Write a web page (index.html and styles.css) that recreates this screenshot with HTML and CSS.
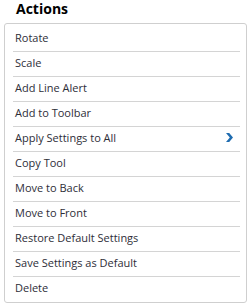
FILE: index.html
```html
<!DOCTYPE html>
<html lang="en">
<head>
    <meta charset="UTF-8">
    <title>Actions</title>
    <link rel="stylesheet" href="styles.css">
</head>
<body>
<div class="actions">
    <h2 class="actions-title">Actions</h2>
    <ul class="actions-list">
        <li>Rotate</li>
        <li>Scale</li>
        <li>Add Line Alert</li>
        <li>Add to Toolbar</li>
        <li class="has-sub">Apply Settings to All
            <svg class="chevron" width="7" height="9" viewBox="0 0 7 9">
                <path d="M0 0 L3.2 0 L7 4.5 L3.2 9 L0 9 L3.8 4.5 Z" fill="#1f6cb0"/>
            </svg>
        </li>
        <li>Copy Tool</li>
        <li>Move to Back</li>
        <li>Move to Front</li>
        <li>Restore Default Settings</li>
        <li>Save Settings as Default</li>
        <li>Delete</li>
    </ul>
</div>
</body>
</html>
```
FILE: styles.css
```css
* {
    margin: 0;
    padding: 0;
    box-sizing: border-box;
}

body {
    background: #fff;
    font-family: "Open Sans", sans-serif;
    color: #2e2e38;
}

.actions {
    width: 252px;
    padding: 0 5px 0 4px;
}

/* title */
.actions-title {
    font-size: 14px;
    font-weight: bold;
    color: #000;
    height: 23px;
    line-height: 18px;
    padding-left: 12px;
}

.actions-list {
    list-style: none;
    border: 1px solid #cfcfcf;
    border-radius: 3px;
    padding: 3px 6px 1px 8px;
}

.actions-list li {
    height: 25px;
    line-height: 22px;
    font-size: 11px;
    padding: 0 0 2px 2px;
    border-bottom: 1px solid #d4d4d4;
    display: flex;
    justify-content: space-between;
    align-items: center;
}

.actions-list li:last-child {
    height: 24px;
    border-bottom: none;
}

.chevron {
    margin-right: 7px;
    margin-top: -2px;
}
```
